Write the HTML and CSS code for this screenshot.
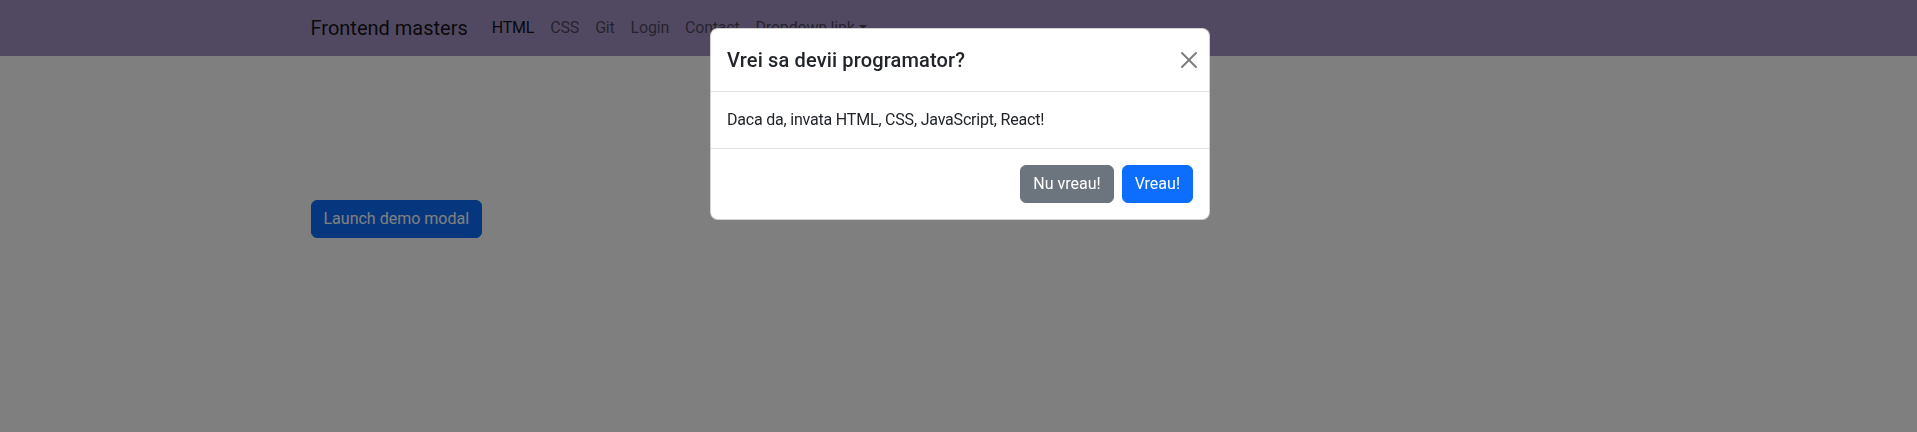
FILE: index.html
```html
<!DOCTYPE html>
<html lang="ro">
<head>
<meta charset="utf-8">
<title>Frontend masters</title>
<link rel="stylesheet" href="styles.css">
</head>
<body>
<nav class="navbar">
  <div class="container nav-inner">
    <a class="brand" href="#">Frontend masters</a>
    <ul class="nav-list">
      <li><a class="nav-link active" href="#">HTML</a></li>
      <li><a class="nav-link" href="#">CSS</a></li>
      <li><a class="nav-link" href="#">Git</a></li>
      <li><a class="nav-link" href="#">Login</a></li>
      <li><a class="nav-link" href="#">Contact</a></li>
      <li><a class="nav-link dropdown-toggle" href="#">Dropdown link</a></li>
    </ul>
  </div>
</nav>
<main class="container main">
  <button class="btn btn-primary" type="button">Launch demo modal</button>
</main>

<div class="backdrop"></div>
<div class="modal-dialog">
  <div class="modal-content">
    <div class="modal-header">
      <h5 class="modal-title">Vrei sa devii programator?</h5>
      <button class="btn-close" type="button" aria-label="Close">
        <svg viewBox="0 0 16 16" width="16" height="16"><path d="M.293.293a1 1 0 0 1 1.414 0L8 6.586 14.293.293a1 1 0 1 1 1.414 1.414L9.414 8l6.293 6.293a1 1 0 0 1-1.414 1.414L8 9.414l-6.293 6.293a1 1 0 0 1-1.414-1.414L6.586 8 .293 1.707a1 1 0 0 1 0-1.414"/></svg>
      </button>
    </div>
    <div class="modal-body">Daca da, invata HTML, CSS, JavaScript, React!</div>
    <div class="modal-footer">
      <button class="btn btn-secondary" type="button">Nu vreau!</button>
      <button class="btn btn-primary" type="button">Vreau!</button>
    </div>
  </div>
</div>
</body>
</html>
```
FILE: styles.css
```css
* { box-sizing: border-box; }
html, body { margin: 0; padding: 0; }
body {
  font-family: Roboto, "Liberation Sans", Arial, sans-serif;
  font-size: 16px;
  line-height: 1.5;
  color: #212529;
  background: #fff;
  height: 432px;
  overflow: hidden;
}
.container {
  width: 1320px;
  margin: 0 auto;
  padding: 0 12px;
}
.navbar {
  background: #a292c2;
  padding: 8px 0;
}
.nav-inner {
  display: flex;
  align-items: center;
}
.brand {
  font-size: 20px;
  line-height: 30px;
  padding: 5px 0;
  margin-right: 16px;
  color: rgba(0,0,0,.9);
  text-decoration: none;
}
.nav-list {
  display: flex;
  list-style: none;
  margin: 0;
  padding: 0;
}
.nav-link {
  display: block;
  padding: 8px;
  color: rgba(0,0,0,.55);
  text-decoration: none;
  letter-spacing: -0.2px;
}
.nav-link.active { color: rgba(0,0,0,.9); }
.dropdown-toggle::after {
  content: "";
  display: inline-block;
  margin-left: .255em;
  vertical-align: .255em;
  border-top: .3em solid;
  border-right: .3em solid transparent;
  border-left: .3em solid transparent;
  border-bottom: 0;
}
.main { padding-top: 144px; }
.btn {
  display: inline-block;
  font-family: inherit;
  font-size: 16px;
  line-height: 24px;
  padding: 6px 12px;
  border: 1px solid transparent;
  border-radius: 6px;
  color: #fff;
  cursor: pointer;
}
.btn-primary { background: #0d6efd; border-color: #0d6efd; }
.btn-secondary { background: #6c757d; border-color: #6c757d; }
.backdrop {
  position: fixed;
  inset: 0;
  background: #000;
  opacity: .5;
}
.modal-dialog {
  position: fixed;
  top: 28px;
  left: 710px;
  width: 500px;
}
.modal-content {
  background: #fff;
  border: 1px solid rgba(0,0,0,.175);
  border-radius: 8px;
  overflow: hidden;
}
.modal-header {
  display: flex;
  align-items: center;
  padding: 16px;
  border-bottom: 1px solid #dee2e6;
}
.modal-title {
  margin: 0;
  font-size: 20px;
  line-height: 30px;
  font-weight: 500;
  letter-spacing: 0.15px;
}
.btn-close {
  margin: -8px -8px -8px auto;
  padding: 4px;
  width: 24px;
  height: 24px;
  border: 0;
  background: transparent;
  opacity: .5;
  display: flex;
}
.btn-close svg { fill: #000; }
.modal-body {
  padding: 16px;
  letter-spacing: -0.2px;
}
.modal-footer {
  display: flex;
  justify-content: flex-end;
  align-items: center;
  padding: 12px;
  border-top: 1px solid #dee2e6;
}
.modal-footer .btn { margin: 4px; }
```
